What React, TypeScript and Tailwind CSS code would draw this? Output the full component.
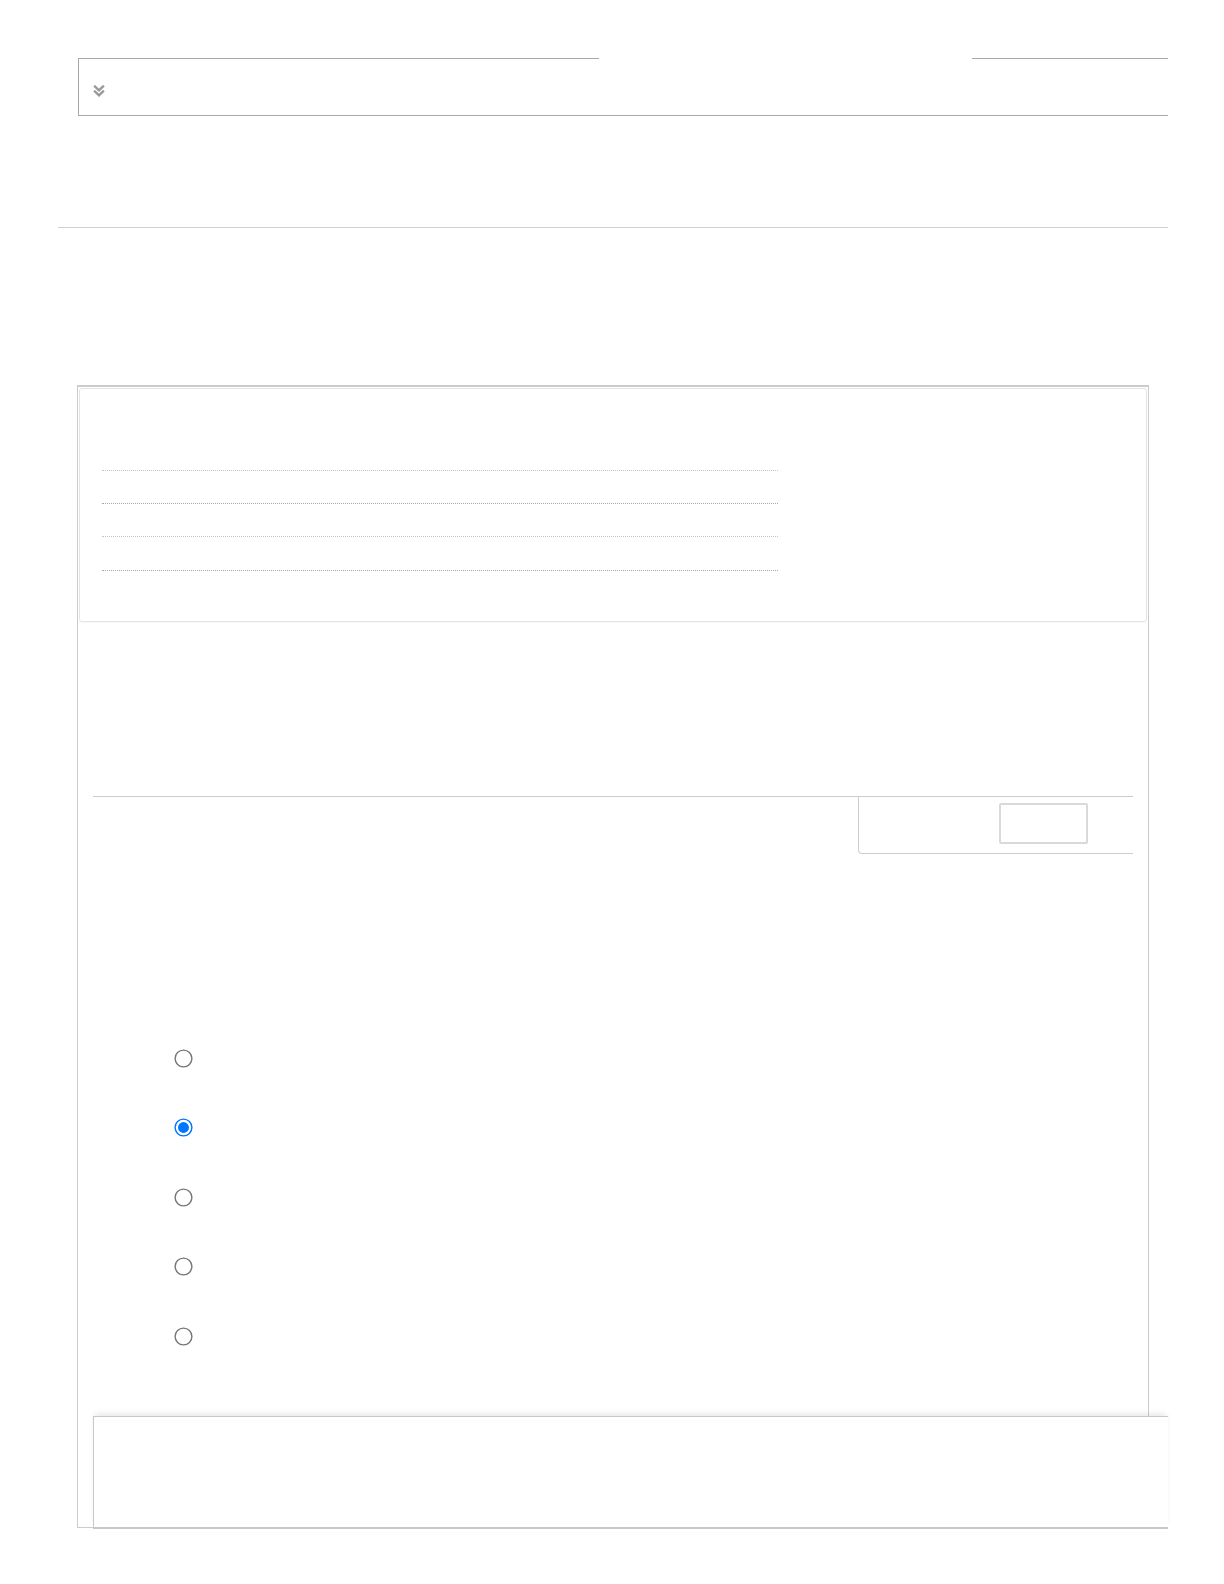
import React from "react";

function DoubleChevron() {
  return (
    <svg width="12" height="12" viewBox="0 0 12 12" fill="none">
      <polyline points="2,1.5 6,5.3 10,1.5" stroke="#999999" strokeWidth="2.4" strokeLinecap="square" />
      <polyline points="2,6.5 6,10.3 10,6.5" stroke="#999999" strokeWidth="2.4" strokeLinecap="square" />
    </svg>
  );
}

export default function App() {
  const radios = [false, true, false, false, false];
  return (
    <div className="w-[1224px] h-[1584px] bg-white pt-[58px] pl-[58px] font-['Liberation_Sans',sans-serif]">
      <div className="w-[1110px]">
        {/* Top collapsible box */}
        <div className="ml-[20px] w-[1090px] h-[58px] border-l border-b border-[#a8a8a8] flex flex-col">
          <div className="flex h-px">
            <div className="w-[520px] bg-[#a8a8a8]" />
            <div className="w-[373px]" />
            <div className="flex-1 bg-[#a8a8a8]" />
          </div>
          <div className="pl-[14px] pt-[26px]">
            <DoubleChevron />
          </div>
        </div>

        {/* Separator */}
        <div className="mt-[111px] h-px w-[1110px] bg-[#d0d0d0]" />

        {/* Main panel */}
        <div className="mt-[157px] ml-[19px] w-[1072px] border-t-2 border-l border-r border-b border-[#cccccc] flex flex-col">
          <div className="mx-px mt-px h-[234px] rounded-[3px] border border-[#e4e4e4] shadow-[0_1px_1px_rgba(0,0,0,0.03)] pt-[81px] pl-[22px] flex flex-col">
            <div className="w-[676px] border-t border-dotted border-[#c4c4c4]" />
            <div className="mt-[32px] w-[676px] border-t border-dotted border-[#a8a8a8]" />
            <div className="mt-[32px] w-[676px] border-t border-dotted border-[#c4c4c4]" />
            <div className="mt-[33px] w-[676px] border-t border-dotted border-[#a8a8a8]" />
          </div>

          <div className="mt-[174px] ml-[15px] w-[1040px] h-px bg-[#cccccc]" />
          <div className="ml-[780px] w-[275px] h-[57px] border-l border-b border-[#cccccc] rounded-bl-[4px] pl-[140px] pt-[6px]">
            <div className="w-[89px] h-[41px] border-2 border-[#d9d9d9] rounded-[2px]" />
          </div>

          <div className="mt-[195px] ml-[96px] flex flex-col gap-[51.5px]">
            {radios.map((c, i) => (
              <div key={i} className="w-[18px] h-[18px] flex items-center justify-center">
                <input
                  type="radio"
                  name="opt"
                  defaultChecked={c}
                  className="m-0 w-[13px] h-[13px] block scale-[1.4] shrink-0"
                />
              </div>
            ))}
          </div>

          <div className="mt-[71px] -mb-[2px] ml-[15px] w-[1075px] h-[113px] border-l border-t border-b-2 border-[#c8c8c8] bg-white shadow-[0_-4px_6px_-2px_rgba(0,0,0,0.1)]" />
        </div>
      </div>
    </div>
  );
}
